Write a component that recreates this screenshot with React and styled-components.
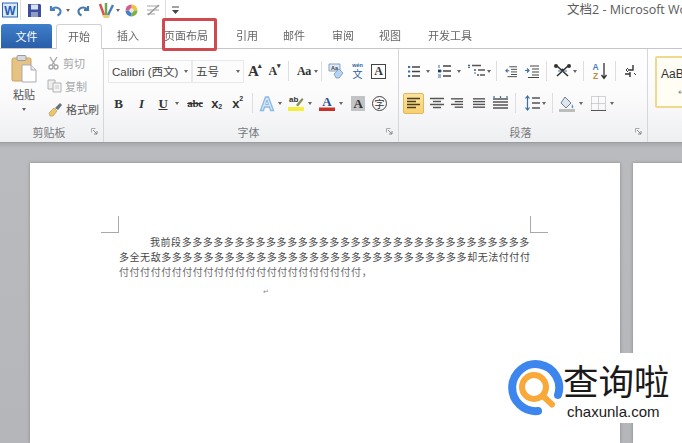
import React from "react";
import styled, { createGlobalStyle } from "styled-components";

const Global = createGlobalStyle`
  html, body { margin: 0; padding: 0; background: #b4b6b9; }
  * { box-sizing: border-box; }
`;

const UI = `"Noto Sans CJK SC", "Liberation Sans", sans-serif`;

const Root = styled.div`
  position: relative;
  width: 682px;
  height: 443px;
  overflow: hidden;
  display: flex;
  flex-direction: column;
  font-family: ${UI};
  color: #555;
  filter: blur(0.35px);
`;

const TitleBar = styled.div`
  height: 22px;
  flex: none;
  display: flex;
  align-items: center;
  padding: 0 0 2px 1px;
  background: #fff;
`;

const TitleText = styled.div`
  margin-left: auto;
  width: 115px;
  white-space: nowrap;
  overflow: hidden;
  font-size: 12.5px;
  line-height: 22px;
  color: #5a5a5a;
  font-family: "Open Sans", "Noto Sans CJK SC", sans-serif;
`;

const Quick = styled.span`
  display: inline-flex;
  flex: none;
  margin-left: ${(p) => p.$ml || 0}px;
`;

const TabBar = styled.div`
  height: 26px;
  flex: none;
  display: flex;
  align-items: flex-end;
  background: #fff;
  position: relative;
`;

const FileTab = styled.div`
  width: 51px;
  height: 24px;
  margin-left: 1px;
  border-radius: 3px 3px 0 0;
  background: linear-gradient(#3f7fcb, #2a5ea8);
  color: #fff;
  font-size: 11px;
  line-height: 25px;
  text-align: center;
`;

const Tab = styled.div`
  flex: none;
  width: ${(p) => p.$w}px;
  margin-left: ${(p) => p.$ml}px;
  height: ${(p) => (p.$active ? 25 : 24)}px;
  margin-bottom: ${(p) => (p.$active ? -1 : 0)}px;
  font-size: 11px;
  line-height: 23px;
  text-align: center;
  white-space: nowrap;
  color: #666;
  background: ${(p) => (p.$active ? "#fff" : "transparent")};
  border: ${(p) => (p.$active ? "1px solid #cfd1d3" : "none")};
  border-bottom: none;
  border-radius: 3px 3px 0 0;
  position: relative;
  z-index: 1;
`;

const Highlight = styled.div`
  position: absolute;
  left: 162px;
  top: -4px;
  width: 55px;
  height: 33px;
  border: 3px solid #cf4a4e;
  border-radius: 2px;
  z-index: 3;
`;

const Ribbon = styled.div`
  height: 94px;
  flex: none;
  display: flex;
  background: linear-gradient(#fff 0%, #fbfbfc 50%, #eeeff1 100%);
  border-top: 1px solid #c3c5c8;
`;

const Group = styled.div`
  flex: none;
  width: ${(p) => p.$w}px;
  display: flex;
  flex-direction: column;
  border-right: ${(p) => (p.$last ? "none" : "1px solid #d5d7d9")};
`;

const GroupBody = styled.div`
  flex: 1;
  min-height: 0;
`;

const GroupFooter = styled.div`
  height: 17px;
  margin-bottom: 2px;
  display: grid;
  grid-template-columns: 1fr auto 1fr;
  align-items: center;
  padding-right: 5px;
  font-size: 11px;
  color: #77797c;
`;

const Launcher = styled.svg`
  justify-self: end;
  width: 7px;
  height: 7px;
`;

const ClipBody = styled(GroupBody)`
  display: flex;
  padding: 6px 0 0 9px;
`;

const PasteCol = styled.div`
  width: 30px;
  display: flex;
  flex-direction: column;
  align-items: center;
  font-size: 11px;
  color: #555;
  line-height: 14px;
`;

const PasteLabel = styled.div`
  margin-top: 4px;
`;

const PasteCaret = styled.span`
  margin-top: 7px;
  width: 0;
  height: 0;
  border-left: 2.5px solid transparent;
  border-right: 2.5px solid transparent;
  border-top: 3px solid #666;
`;

const ClipCol = styled.div`
  margin-left: 8px;
  margin-top: 0;
  display: flex;
  flex-direction: column;
  gap: 7px;
`;

const ClipRow = styled.div`
  height: 16px;
  display: flex;
  align-items: center;
  gap: 3px;
  font-size: 11px;
  white-space: nowrap;
  color: ${(p) => (p.$muted ? "#a4a6a8" : "#555")};
`;

const RowStack = styled(GroupBody)`
  padding-top: 10px;
  display: flex;
  flex-direction: column;
  gap: 8px;
`;

const Row = styled.div`
  height: 24px;
  display: flex;
  align-items: center;
  padding-left: ${(p) => p.$pl || 0}px;
`;

const Combo = styled.div`
  flex: none;
  width: ${(p) => p.$w}px;
  height: 23px;
  margin-left: ${(p) => p.$ml || 0}px;
  display: flex;
  align-items: center;
  justify-content: space-between;
  padding: 0 3px;
  font-size: 11.5px;
  color: #444;
  background: #fcfcfc;
  border: 1px solid #e8e9ea;
  white-space: nowrap;
  font-family: "Liberation Sans", "Noto Sans CJK SC", sans-serif;
`;

const Sep = styled.span`
  flex: none;
  width: 1px;
  height: 20px;
  background: #dcdee0;
  margin-left: ${(p) => p.$ml}px;
`;

const Caret = styled.span`
  flex: none;
  width: 0;
  height: 0;
  margin-left: ${(p) => p.$ml || 0}px;
  border-left: 2.5px solid transparent;
  border-right: 2.5px solid transparent;
  border-top: 3px solid #666;
`;

const Tool = styled.span`
  flex: none;
  display: inline-flex;
  align-items: center;
  justify-content: center;
  width: ${(p) => p.$w}px;
  height: 20px;
  margin-left: ${(p) => p.$ml || 0}px;
`;

const Letter = styled(Tool)`
  font-family: ${(p) => (p.$sans ? `"Liberation Sans"` : `"Liberation Serif"`)}, serif;
  font-size: ${(p) => p.$size || 13}px;
  font-weight: 700;
  font-style: ${(p) => (p.$italic ? "italic" : "normal")};
  text-decoration: ${(p) => p.$deco || "none"};
  color: ${(p) => p.$color || "#333"};
  letter-spacing: -0.3px;
  line-height: 1;
`;

const Sup = styled.span`
  font-size: 7px;
  align-self: flex-start;
  margin-top: 2px;
`;

const Sub = styled.span`
  font-size: 7px;
  align-self: flex-end;
  margin-bottom: 3px;
`;

const BoxedLetter = styled(Letter)`
  height: 15px;
  border: 1px solid #444;
  background: #fff;
`;

const GrayLetter = styled(Letter)`
  height: 15px;
  background: #c2c3c4;
`;

const CircleLetter = styled(Tool)`
  height: ${(p) => p.$w}px;
  border: 1.5px solid #444;
  border-radius: 50%;
  font-size: 10px;
  color: #333;
`;

const ActiveTool = styled(Tool)`
  height: 21px;
  background: linear-gradient(#fbe3a0, #f8cf6d);
  border: 1px solid #e2b95a;
  border-radius: 2px;
`;

const StylesBody = styled.div`
  padding: 7px 0 0 7px;
`;

const StyleCard = styled.div`
  width: 60px;
  height: 52px;
  background: #fffdf4;
  border: 2px solid #f0d98e;
  border-radius: 2px;
  padding: 9px 0 0 4px;
  font-family: "Liberation Sans", sans-serif;
  font-size: 12px;
  color: #333;
`;

const StyleMark = styled.div`
  margin: 6px 0 0 17px;
  font-size: 9px;
  color: #888;
`;

const Workspace = styled.div`
  flex: 1;
  min-height: 0;
  display: flex;
  gap: 13px;
  padding: 21px 0 0 30px;
  background: linear-gradient(#8f9194 0, #a6a8ab 1px, #b9bbbe 6px, #b4b6b9 100%);
`;

const Page = styled.div`
  flex: none;
  width: ${(p) => p.$w}px;
  background: #fff;
  box-shadow: 0 0 3px rgba(70, 70, 70, 0.45);
`;

const FirstPage = styled(Page)`
  padding-top: 53px;
`;

const Margins = styled.div`
  display: flex;
  justify-content: space-between;
  padding: 0 72px 0 71px;
`;

const Corner = styled.div`
  width: 18px;
  height: 17px;
  border-bottom: 1px solid #a9a9a9;
  border-${(p) => (p.$right ? "left" : "right")}: 1px solid #a9a9a9;
`;

const Body = styled.div`
  margin: 1px 0 0 89px;
  font-family: "Noto Sans CJK SC", sans-serif;
  font-size: 10px;
  line-height: 15px;
  letter-spacing: 0.55px;
  color: #484848;
  white-space: nowrap;
`;

const BodyLine = styled.div`
  padding-left: ${(p) => p.$indent || 0}px;
  color: ${(p) => (p.$faint ? "#6a6a6a" : "inherit")};
`;

const BodyMark = styled.div`
  margin: 8px 0 0 233px;
  font-size: 7px;
  line-height: 8px;
  color: #888;
`;

const Brand = styled.div`
  position: absolute;
  right: 0;
  top: 353px;
  width: 182px;
  height: 70px;
  background: #fff;
  display: flex;
  align-items: flex-start;
  padding: 5px 0 0 8px;
  z-index: 4;
`;

const BrandWords = styled.div`
  margin-left: -1px;
  display: flex;
  flex-direction: column;
  color: #1a1a1a;
`;

const BrandName = styled.div`
  font-family: "Noto Sans CJK SC", sans-serif;
  font-size: 35.5px;
  line-height: 40px;
  margin-top: 2px;
  white-space: nowrap;
`;

const BrandUrl = styled.div`
  margin: 3px 0 0 4px;
  font-family: "Liberation Sans", sans-serif;
  font-size: 15px;
  line-height: 18px;
`;

const WordIcon = () => (
  <svg width="16" height="16" viewBox="0 0 16 16">
    <rect x="0.5" y="1" width="15" height="14" fill="#dce9f8" stroke="#2b66b5" />
    <text x="8" y="12.5" textAnchor="middle" fontSize="12" fontWeight="700" fontFamily="Liberation Sans" fill="#1f5bb0">W</text>
  </svg>
);

const SaveIcon = () => (
  <svg width="15" height="15" viewBox="0 0 15 15">
    <path d="M1 1h12l1 1v12H1z" fill="#3d4f9c" />
    <rect x="4" y="1.5" width="7" height="5" fill="#d8e2f2" />
    <rect x="4" y="9" width="7" height="5" fill="#8f9cc8" />
  </svg>
);

const UndoIcon = ({ flip }) => (
  <svg width="15" height="15" viewBox="0 0 15 15" style={flip ? { transform: "scaleX(-1)" } : undefined}>
    <path d="M3 3v4h4M3.5 7C5 4 10 3.5 12 6.5c1.5 2.5 0 5-2.5 6" fill="none" stroke={flip ? "#4878ae" : "#4a7fc0"} strokeWidth="2.2" />
  </svg>
);

const BrushesIcon = () => (
  <svg width="17" height="17" viewBox="0 0 17 17">
    <path d="M2 2l4 11" stroke="#d9534f" strokeWidth="2.5" />
    <path d="M8 1v12" stroke="#6aa84f" strokeWidth="2.5" />
    <path d="M15 3l-5 10" stroke="#4a7fc0" strokeWidth="2.5" />
    <path d="M4 13h8l-1 3H6z" fill="#eecb7a" />
  </svg>
);

const ColorWheel = () => (
  <svg width="13" height="13" viewBox="0 0 13 13">
    <path d="M6.5 6.5V.5a6 6 0 0 1 6 6z" fill="#e9c63f" />
    <path d="M6.5 6.5h6a6 6 0 0 1-6 6z" fill="#7cb342" />
    <path d="M6.5 6.5v6a6 6 0 0 1-6-6z" fill="#3f7fcb" />
    <path d="M6.5 6.5h-6a6 6 0 0 1 6-6z" fill="#d85b8a" />
    <circle cx="6.5" cy="6.5" r="2.2" fill="#e8e8e8" />
  </svg>
);

const PenIcon = () => (
  <svg width="16" height="14" viewBox="0 0 16 14">
    <path d="M2 3h12M2 7h12M2 11h8" stroke="#c4c4c4" strokeWidth="1.6" />
    <path d="M3 12L14 2" stroke="#9a9a9a" strokeWidth="1.6" />
  </svg>
);

const QuickMore = () => (
  <svg width="7" height="9" viewBox="0 0 7 9">
    <path d="M0 1h7" stroke="#444" />
    <path d="M0 4h7L3.5 8z" fill="#444" />
  </svg>
);

const PasteIcon = () => (
  <svg width="26" height="28" viewBox="0 0 26 28">
    <rect x="1" y="3" width="19" height="23" rx="1.5" fill="#e6c383" stroke="#c9a25e" />
    <rect x="6" y="0.5" width="9" height="5" rx="1" fill="#d7d9dc" stroke="#9a9c9f" />
    <path d="M11 10h9l5 5v12H11z" fill="#fff" stroke="#a9abae" />
    <path d="M20 10v5h5" fill="#e8eaee" stroke="#a9abae" />
  </svg>
);

const ScissorsIcon = () => (
  <svg width="13" height="14" viewBox="0 0 13 14">
    <path d="M3 1l5 8M10 1L5 9" stroke="#a6a8aa" strokeWidth="1.4" />
    <circle cx="4" cy="11" r="2" fill="none" stroke="#a6a8aa" strokeWidth="1.4" />
    <circle cx="9" cy="11" r="2" fill="none" stroke="#a6a8aa" strokeWidth="1.4" />
  </svg>
);

const CopyIcon = () => (
  <svg width="15" height="14" viewBox="0 0 15 14">
    <path d="M1 1h7v9H1z" fill="#eee" stroke="#b0b2b4" />
    <path d="M6 4h8v9H6z" fill="#f5f5f5" stroke="#b0b2b4" />
    <path d="M8 7h4M8 9h4" stroke="#c5c7c9" />
  </svg>
);

const BrushIcon = () => (
  <svg width="16" height="15" viewBox="0 0 16 15">
    <path d="M2 11l5-5 3 3-4 5H3z" fill="#ecc56f" stroke="#b88e3b" strokeWidth="0.6" />
    <path d="M8 6l5-5 2 2-4 5z" fill="#68727c" />
  </svg>
);

const CornerMark = () => (
  <Launcher viewBox="0 0 7 7">
    <path d="M0.5 0.5h4M0.5 0.5v4" stroke="#aaa" fill="none" />
    <path d="M2 2l4 4M6 3v3H3" stroke="#888" fill="none" />
  </Launcher>
);

const Eraser = () => (
  <svg width="16" height="16" viewBox="0 0 16 16">
    <path d="M1 1h11v7H1z" fill="#dfe9f5" stroke="#7fa3cc" />
    <text x="6.5" y="7" textAnchor="middle" fontSize="5.5" fontWeight="700" fontFamily="Liberation Sans" fill="#444">Aa</text>
    <path d="M6 11l5-5 4 4-4 5H8z" fill="#b9d3ef" stroke="#6f97c6" strokeWidth="0.8" />
  </svg>
);

const WenIcon = () => (
  <svg width="17" height="18" viewBox="0 0 17 18">
    <text x="8.5" y="5" textAnchor="middle" fontSize="5.5" fontWeight="700" fontFamily="Liberation Sans" fill="#2f5f9e">wén</text>
    <text x="8.5" y="15.5" textAnchor="middle" fontSize="10" fontFamily="Noto Sans CJK SC" fill="#2f5f9e">文</text>
  </svg>
);

const GlowA = () => (
  <svg width="16" height="17" viewBox="0 0 16 17">
    <path d="M1.5 15.5L6.5 2h3l5 13.5h-3L10.5 12h-5l-1 3.5z" fill="#d3e5f7" stroke="#8cb9e6" strokeWidth="1.3" />
    <path d="M6.5 9.5L8 5l1.5 4.5z" fill="#fff" stroke="#8cb9e6" />
  </svg>
);

const HighlightIcon = () => (
  <svg width="16" height="18" viewBox="0 0 16 18">
    <text x="1" y="8" fontSize="8" fontWeight="700" fontFamily="Liberation Sans" fill="#333">ab</text>
    <path d="M8 11l6-7 1.5 1.5L10 12.5z" fill="#8a8f55" />
    <rect x="0" y="13" width="16" height="4" fill="#f4ee3c" />
  </svg>
);

const ColorA = () => (
  <svg width="16" height="18" viewBox="0 0 16 18">
    <text x="8" y="12" textAnchor="middle" fontSize="13" fontWeight="700" fontFamily="Liberation Serif" fill="#2b4e8f">A</text>
    <rect x="0" y="13.5" width="16" height="3.5" fill="#c9302c" />
  </svg>
);

const BulletList = () => (
  <svg width="12" height="13" viewBox="0 0 12 13">
    <path d="M4 2h8M4 6.5h8M4 11h8" stroke="#444" strokeWidth="1.3" />
    <path d="M0 2h2.2M0 6.5h2.2M0 11h2.2" stroke="#3c6ea8" strokeWidth="2" />
  </svg>
);

const NumberList = () => (
  <svg width="13" height="14" viewBox="0 0 13 14">
    <path d="M5 2h8M5 7h8M5 12h8" stroke="#444" strokeWidth="1.3" />
    <path d="M1 1v3M0 6h3v2H0M0 11h3M0 13h3" stroke="#3c6ea8" />
  </svg>
);

const MultiList = () => (
  <svg width="18" height="14" viewBox="0 0 18 14">
    <path d="M0 1.5h2M4 1.5h9M6 6h2M10 6h7M9 11h2M12 11h5" stroke="#555" strokeWidth="1.3" />
    <path d="M0 3.5h2M6 9h2" stroke="#3c6ea8" />
  </svg>
);

const IndentIcon = ({ w, out }) => (
  <svg width={w} height="13" viewBox="0 0 14 13">
    <path d="M5 1h9M7 4h7M7 7h7M7 10h7M3 12.5h11" stroke="#444" strokeWidth="1.1" />
    <path d={out ? "M5 5.5H1M3 3.5l-2 2 2 2" : "M0 5.5h4M2 3.5l2 2-2 2"} fill="none" stroke="#3c6ea8" strokeWidth="1.2" />
  </svg>
);

const CrossIcon = () => (
  <svg width="19" height="14" viewBox="0 0 19 14">
    <path d="M4 2l11 10M15 2L4 12" stroke="#333" strokeWidth="1.6" />
    <path d="M5 7h9" stroke="#3c6ea8" />
    <circle cx="3" cy="2" r="2" fill="#333" />
    <circle cx="16" cy="2" r="2" fill="#333" />
    <circle cx="9.5" cy="6" r="1.5" fill="#333" />
  </svg>
);

const SortIcon = () => (
  <svg width="17" height="18" viewBox="0 0 17 18">
    <text x="4.5" y="8" textAnchor="middle" fontSize="8.5" fontWeight="700" fontFamily="Liberation Sans" fill="#4d7db5">A</text>
    <text x="4.5" y="17" textAnchor="middle" fontSize="8.5" fontWeight="700" fontFamily="Liberation Sans" fill="#c28a3a">Z</text>
    <path d="M13 1v15M10.5 13l2.5 3.5 2.5-3.5" fill="none" stroke="#333" strokeWidth="1.3" />
  </svg>
);

const MarksIcon = () => (
  <svg width="12" height="14" viewBox="0 0 12 14">
    <path d="M9 1v5H4M6 8v5M1 10h5" fill="none" stroke="#333" strokeWidth="1.4" />
    <path d="M4 4L2 6l2 2M10 9l2 2" fill="none" stroke="#333" />
  </svg>
);

const Lines = ({ kind, color = "#555" }) => {
  const rows = {
    left: ["M0 1.5h13", "M0 4.5h9", "M0 7.5h13", "M0 10.5h9"],
    center: ["M0 1.5h14", "M3 4.5h8", "M0 7.5h14", "M3 10.5h8"],
    right: ["M0 1.5h13", "M4 4.5h9", "M0 7.5h13", "M4 10.5h9"],
    justify: ["M0 1.5h13", "M0 4.5h13", "M0 7.5h13", "M0 10.5h13"],
    even: ["M0 3h15", "M0 6h15", "M0 9h15", "M0 12h15"],
  }[kind];
  const even = kind === "even";
  return (
    <svg width={even ? 15 : 14} height={even ? 15 : 12} viewBox={even ? "0 0 15 15" : "0 0 14 12"}>
      {rows.map((d) => (
        <path key={d} d={d} stroke={color} strokeWidth="1.5" />
      ))}
      {even && <path d="M1 0v2M7.5 0v2M14 0v2" stroke="#3c6ea8" strokeWidth="1.2" />}
    </svg>
  );
};

const SpacingIcon = () => (
  <svg width="15" height="16" viewBox="0 0 15 16">
    <path d="M7 3h8M7 8h8M7 13h8" stroke="#555" strokeWidth="1.4" />
    <path d="M2.5 1v14M0.5 3.5l2-2.5 2 2.5M0.5 12.5l2 2.5 2-2.5" fill="none" stroke="#3c6ea8" strokeWidth="1.2" />
  </svg>
);

const ShadingIcon = () => (
  <svg width="16" height="17" viewBox="0 0 16 17">
    <path d="M6 2l6 6-5 5-5-5z" fill="#dfe6ee" stroke="#6c7f95" />
    <path d="M13 9c1 2 2 3 1 4s-2-1-1-4" fill="#5f93cc" />
    <rect x="0" y="14" width="16" height="3" fill="#bdbdbd" />
  </svg>
);

const BordersIcon = () => (
  <svg width="15" height="15" viewBox="0 0 15 15">
    <path d="M0.5 0.5h14v14H0.5zM7.5 0.5v14M0.5 7.5h14" fill="none" stroke="#a9abae" strokeDasharray="1 1" />
    <path d="M0 14.5h15" stroke="#555" />
  </svg>
);

const BrandMark = () => (
  <svg width="56" height="58" viewBox="0 0 56 58">
    <path d="M50 37A23.5 23.5 0 1 0 30 53" fill="none" stroke="#3c86ee" strokeWidth="8" strokeLinecap="round" />
    <circle cx="26" cy="29" r="12" fill="none" stroke="#f8a93a" strokeWidth="6" />
    <path d="M35 38l9 8.5" stroke="#f8a93a" strokeWidth="6" strokeLinecap="round" />
  </svg>
);

export default function App() {
  return (
    <Root>
      <Global />
      <TitleBar>
        <Quick $ml={1}><WordIcon /></Quick>
        <Sep $ml={2} />
        <Quick $ml={6}><SaveIcon /></Quick>
        <Quick $ml={6}><UndoIcon /></Quick>
        <Caret $ml={3} />
        <Quick $ml={6}><UndoIcon flip /></Quick>
        <Quick $ml={7}><BrushesIcon /></Quick>
        <Caret $ml={1} />
        <Quick $ml={5}><ColorWheel /></Quick>
        <Quick $ml={7}><PenIcon /></Quick>
        <Sep $ml={4} />
        <Quick $ml={6}><QuickMore /></Quick>
        <TitleText>文档2 - Microsoft Word</TitleText>
      </TitleBar>

      <TabBar>
        <FileTab>文件</FileTab>
        <Tab $w={46} $ml={4} $active>开始</Tab>
        <Tab $w={24} $ml={14}>插入</Tab>
        <Tab $w={46} $ml={23}>页面布局</Tab>
        <Tab $w={24} $ml={26}>引用</Tab>
        <Tab $w={24} $ml={23}>邮件</Tab>
        <Tab $w={24} $ml={25}>审阅</Tab>
        <Tab $w={24} $ml={23}>视图</Tab>
        <Tab $w={46} $ml={25}>开发工具</Tab>
        <Highlight />
      </TabBar>

      <Ribbon>
        <Group $w={104}>
          <ClipBody>
            <PasteCol>
              <PasteIcon />
              <PasteLabel>粘贴</PasteLabel>
              <PasteCaret />
            </PasteCol>
            <ClipCol>
              <ClipRow $muted><ScissorsIcon />剪切</ClipRow>
              <ClipRow $muted><CopyIcon />复制</ClipRow>
              <ClipRow><BrushIcon />格式刷</ClipRow>
            </ClipCol>
          </ClipBody>
          <GroupFooter>
            <span />
            <span>剪贴板</span>
            <CornerMark />
          </GroupFooter>
        </Group>

        <Group $w={295}>
          <RowStack>
            <Row $pl={4}>
              <Combo $w={84}>Calibri (西文)<Caret /></Combo>
              <Combo $w={52}>五号<Caret /></Combo>
              <Letter $w={16} $ml={3} $size={15}>A<Sup>▴</Sup></Letter>
              <Letter $w={13} $ml={5} $size={12}>A<Sup>▾</Sup></Letter>
              <Sep $ml={7} />
              <Letter $w={16} $ml={7} $size={12}>Aa</Letter>
              <Caret $ml={2} />
              <Sep $ml={3} />
              <Tool $w={16} $ml={6}><Eraser /></Tool>
              <Tool $w={17} $ml={5}><WenIcon /></Tool>
              <BoxedLetter $w={15} $ml={5} $size={12}>A</BoxedLetter>
            </Row>
            <Row $pl={10}>
              <Letter $w={9} $size={13}>B</Letter>
              <Letter $w={9} $ml={14} $size={13} $italic>I</Letter>
              <Letter $w={10} $ml={12} $size={13} $deco="underline">U</Letter>
              <Caret $ml={7} />
              <Letter $w={16} $ml={8} $size={11} $deco="line-through">abc</Letter>
              <Letter $w={13} $ml={7} $size={13} $sans>x<Sub>2</Sub></Letter>
              <Letter $w={11} $ml={9} $size={13} $sans>x<Sup>2</Sup></Letter>
              <Sep $ml={9} />
              <Tool $w={16} $ml={6}><GlowA /></Tool>
              <Caret $ml={3} />
              <Tool $w={16} $ml={6}><HighlightIcon /></Tool>
              <Caret $ml={4} />
              <Tool $w={16} $ml={7}><ColorA /></Tool>
              <Caret $ml={4} />
              <GrayLetter $w={14} $ml={8} $size={13}>A</GrayLetter>
              <CircleLetter $w={15} $ml={7}>字</CircleLetter>
            </Row>
          </RowStack>
          <GroupFooter>
            <span />
            <span>字体</span>
            <CornerMark />
          </GroupFooter>
        </Group>

        <Group $w={249}>
          <RowStack>
            <Row $pl={9}>
              <Tool $w={12}><BulletList /></Tool>
              <Caret $ml={6} />
              <Tool $w={13} $ml={8}><NumberList /></Tool>
              <Caret $ml={6} />
              <Tool $w={18} $ml={7}><MultiList /></Tool>
              <Caret $ml={1} />
              <Sep $ml={5} />
              <Tool $w={12} $ml={8}><IndentIcon w={12} out /></Tool>
              <Tool $w={14} $ml={8}><IndentIcon w={14} /></Tool>
              <Sep $ml={7} />
              <Tool $w={19} $ml={6}><CrossIcon /></Tool>
              <Caret $ml={1} />
              <Sep $ml={6} />
              <Tool $w={17} $ml={7}><SortIcon /></Tool>
              <Sep $ml={7} />
              <Tool $w={12} $ml={8}><MarksIcon /></Tool>
            </Row>
            <Row $pl={4}>
              <ActiveTool $w={21}><Lines kind="left" color="#4a4020" /></ActiveTool>
              <Tool $w={14} $ml={6}><Lines kind="center" /></Tool>
              <Tool $w={13} $ml={7}><Lines kind="right" /></Tool>
              <Tool $w={13} $ml={9}><Lines kind="justify" /></Tool>
              <Tool $w={15} $ml={7}><Lines kind="even" /></Tool>
              <Sep $ml={7} />
              <Tool $w={15} $ml={9}><SpacingIcon /></Tool>
              <Caret $ml={2} />
              <Sep $ml={6} />
              <Tool $w={16} $ml={6}><ShadingIcon /></Tool>
              <Caret $ml={4} />
              <Tool $w={15} $ml={8}><BordersIcon /></Tool>
              <Caret $ml={4} />
            </Row>
          </RowStack>
          <GroupFooter>
            <span />
            <span>段落</span>
            <CornerMark />
          </GroupFooter>
        </Group>

        <Group $w={40} $last>
          <StylesBody>
            <StyleCard>
              AaB
              <StyleMark>↵</StyleMark>
            </StyleCard>
          </StylesBody>
        </Group>
      </Ribbon>

      <Workspace>
        <FirstPage $w={590}>
          <Margins>
            <Corner />
            <Corner $right />
          </Margins>
          <Body>
            <BodyLine $indent={31}>我前段{"多".repeat(33)}</BodyLine>
            <BodyLine>多全无敌{"多".repeat(29)}却无法付付付</BodyLine>
            <BodyLine $faint>{"付".repeat(23)}，</BodyLine>
          </Body>
          <BodyMark>↵</BodyMark>
        </FirstPage>
        <Page $w={60} />
      </Workspace>

      <Brand>
        <BrandMark />
        <BrandWords>
          <BrandName>查询啦</BrandName>
          <BrandUrl>chaxunla.com</BrandUrl>
        </BrandWords>
      </Brand>
    </Root>
  );
}
